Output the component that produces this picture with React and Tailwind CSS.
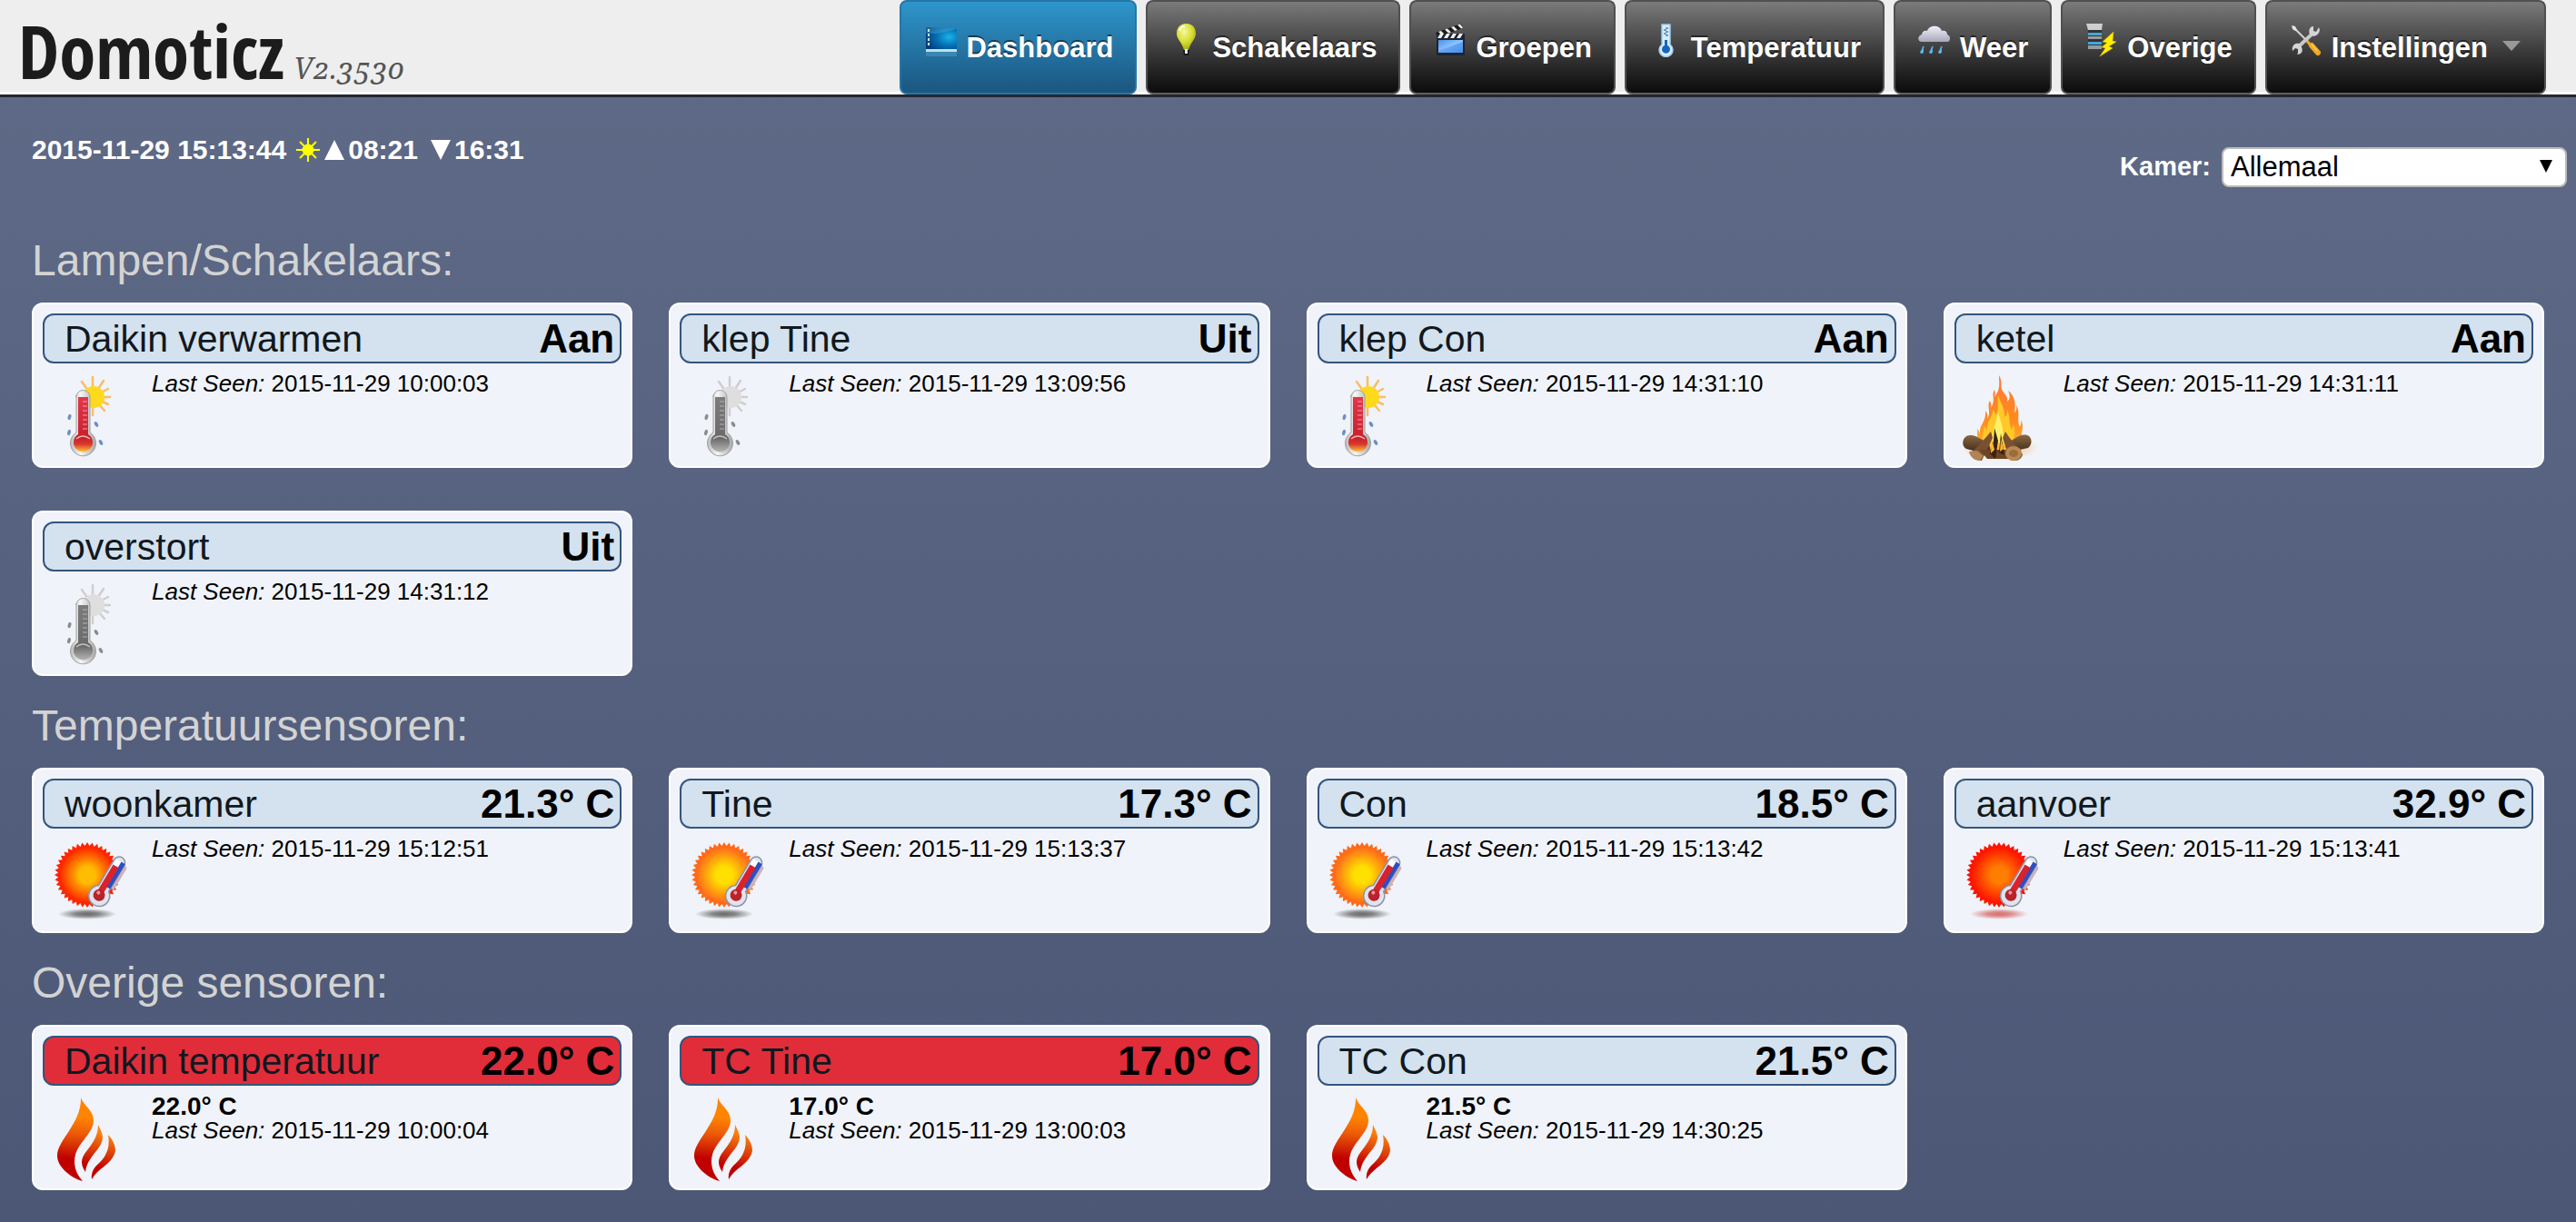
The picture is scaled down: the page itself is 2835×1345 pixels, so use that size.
import { useState } from 'react';

const DashboardIcon = () => (
    <svg viewBox="0 0 36 38" className="w-[36px] h-[38px] shrink-0" aria-hidden="true">
        <defs>
            <radialGradient id="screen" cx="0.75" cy="0.45" r="0.8">
                <stop offset="0" stopColor="#1bb4e6" />
                <stop offset="0.5" stopColor="#0470b4" />
                <stop offset="1" stopColor="#023a78" />
            </radialGradient>
        </defs>
        <rect x="2" y="5" width="34" height="24" fill="url(#screen)" />
        <path d="M2 5h34v2L14 12H2z" fill="#7fd4f5" opacity="0.25" />
        <path d="M4 7h2v3H4zM4 12h2v3H4zM4 17h2v3H4zM4 22h2v3H4z" fill="#c8ecfa" />
        <rect x="2" y="29" width="34" height="3" fill="#b7e2f5" />
        <rect x="2" y="32" width="34" height="5" fill="#8cc6e2" opacity="0.25" />
    </svg>
);

const BulbIcon = () => (
    <svg viewBox="0 0 36 38" className="w-[36px] h-[38px] shrink-0" aria-hidden="true">
        <defs>
            <radialGradient id="bulb" cx="0.4" cy="0.3" r="0.7">
                <stop offset="0" stopColor="#f6f9a0" />
                <stop offset="0.6" stopColor="#d5dc2c" />
                <stop offset="1" stopColor="#a3ab1c" />
            </radialGradient>
        </defs>
        <path d="M17.500 1C10 1 7 6 7 12c0 6 6 10 8 18h5c2-8 8-12 8-18 0-6-3-11-10.500-11z" fill="url(#bulb)" />
        <path d="M14 30h7l-1 6h-5z" fill="#17171a" />
        <path d="M16 29h3v5h-3z" fill="#e8e8e8" />
        <path d="M10 9c1-3 3-5 6-5" stroke="#fcfde0" strokeWidth="2" fill="none" />
    </svg>
);

const ClapperIcon = () => (
    <svg viewBox="0 0 36 38" className="w-[36px] h-[38px] shrink-0" aria-hidden="true">
        <defs>
            <linearGradient id="clap" x1="0" y1="0" x2="1" y2="1">
                <stop offset="0" stopColor="#4a8fe6" />
                <stop offset="0.5" stopColor="#8cc4ff" />
                <stop offset="1" stopColor="#4c97f0" />
            </linearGradient>
        </defs>
        <path d="M2 11L30 1l2 5L4 16z" fill="#1b1b1b" />
        <path d="M5 10l4 4 3-1-4-4zM12 7.500l4 4 3-1-4-4zM19 5l4 4 3-1-4-4zM26 2.500l4 4 2-1-3-4z" fill="#eee" />
        <path d="M3 12h31v24H3z" fill="#1d2430" />
        <path d="M7 12h4l-3 5H4zM14 12h4l-3 5h-4zM21 12h4l-3 5h-4zM28 12h4l-3 5h-4z" fill="#eee" />
        <path d="M5 19h27v14H5z" fill="url(#clap)" />
        <path d="M5 31L32 21v12H5z" fill="#3f88e6" opacity="0.5" />
    </svg>
);

const ThermometerIcon = () => (
    <svg viewBox="0 0 36 38" className="w-[36px] h-[38px] shrink-0" aria-hidden="true">
        <path d="M14 2h9v22a7.500 7.500 0 1 1-9 0z" fill="#d9edfc" stroke="#9ccbee" strokeWidth="1.500" />
        <path d="M17 19h3v6a4.500 4.500 0 1 1-3 0z" fill="#1565c0" />
        <path d="M18 6h3M18 10h3M18 14h3M16 8h3M16 12h3" stroke="#4d7fae" strokeWidth="1.500" />
    </svg>
);

const RainIcon = () => (
    <svg viewBox="0 0 36 38" className="w-[36px] h-[38px] shrink-0" aria-hidden="true">
        <defs>
            <linearGradient id="cloud" x1="0" y1="0" x2="0" y2="1">
                <stop offset="0" stopColor="#f0eff6" />
                <stop offset="1" stopColor="#a9a8bd" />
            </linearGradient>
        </defs>
        <path d="M4 21c-5 0-5-7 0-8 0-3 3-5 6-4 2-7 14-7 16 0 4-1 6 1 6 4 4 1 4 8 0 8z" fill="url(#cloud)" />
        <path d="M6 26l-2 5M16 26l-2 5M26 26l-2 5" stroke="#4aa8de" strokeWidth="2" />
        <path d="M2 32a2 2 0 0 0 4 0l0-4zM12 32a2 2 0 0 0 4 0l0-4zM22 32a2 2 0 0 0 4 0l0-4z" fill="#5bb5e8" />
    </svg>
);

const UtilityIcon = () => (
    <svg viewBox="0 0 36 38" className="w-[36px] h-[38px] shrink-0" aria-hidden="true">
        <path d="M1 1h18l-1 7H3z" fill="#cfcfcf" />
        <rect x="3" y="8" width="15" height="21" fill="#333" />
        <path d="M3 11h15v3H3zM3 21h15v3H3z" fill="#3fa9dc" />
        <path d="M3 15h15v3H3zM3 25h15v4H3z" fill="#9a9a9a" />
        <path d="M31 10L19 21l5 1-6 5 4 1-6 9 14-9-4-2 8-5-4-1z" fill="#ffee00" stroke="#e2bd00" strokeWidth="0.500" />
    </svg>
);

const ToolsIcon = () => (
    <svg viewBox="0 0 36 38" className="w-[36px] h-[38px] shrink-0" aria-hidden="true">
        <path d="M4 5l16 16" stroke="#d5d5d5" strokeWidth="2" />
        <path d="M2 3l4 1 2 4-2 1-3-2z" fill="#e4e4e4" />
        <path d="M10 26l16-15" stroke="#c9c9c9" strokeWidth="4" />
        <path d="M25 4c-4 1-5 7-2 10 4 2 9 0 10-6l-1-3-3 5-3-1V4zM10 23c-5-1-8 3-7 8l3-3 3 1v4l-1 2c5 0 7-4 5-8z" fill="#d4d4d4" />
        <path d="M19 20l4 5" stroke="#f2b01e" strokeWidth="3" />
        <path d="M24 25l7 8" stroke="#f2a81e" strokeWidth="6" strokeLinecap="round" />
        <path d="M24 24l6 7" stroke="#ffd35a" strokeWidth="1.500" />
    </svg>
);

const HeatingIcon = ({ off }) => (
    <svg viewBox="0 0 96 96" className={off ? 'size-24 shrink-0 grayscale' : 'size-24 shrink-0'} aria-hidden="true">
        <defs>
            <linearGradient id="tube" x1="0" y1="0" x2="1" y2="0">
                <stop offset="0" stopColor="#b9b9b9" />
                <stop offset="0.4" stopColor="#f6f6f6" />
                <stop offset="1" stopColor="#a6a6a6" />
            </linearGradient>
            <linearGradient id="mercury" x1="0" y1="0" x2="0" y2="1">
                <stop offset="0" stopColor="#e2384a" />
                <stop offset="0.75" stopColor="#c8202f" />
                <stop offset="0.86" stopColor="#d8392c" />
                <stop offset="1" stopColor="#ffc83a" />
            </linearGradient>
            <linearGradient id="mercuryOff" x1="0" y1="0" x2="0" y2="1">
                <stop offset="0" stopColor="#7c7c7c" />
                <stop offset="0.75" stopColor="#6a6a6a" />
                <stop offset="1" stopColor="#b5b5b5" />
            </linearGradient>
        </defs>
        <g stroke={off ? '#cfcfcf' : '#f9bd6a'} strokeWidth="2.500" strokeLinecap="round">
            <path d="M51 26V4M51 26L63 8M51 26L70 26M51 26L64 41M51 26V46M51 26L39 9M51 26L33 25M51 26L68 17M51 26L68 34" />
        </g>
        <circle cx="52" cy="26" r="12" fill={off ? '#dedede' : '#ffd91c'} />
        <path d="M33 26a7.500 7.500 0 0 1 15 0v39a14 14 0 1 1-15 0z" fill="url(#tube)" stroke="#a0a0a0" strokeWidth="1" />
        <path d="M35 26h11v41a10.500 10.500 0 1 1-11 0z" fill={off ? 'url(#mercuryOff)' : 'url(#mercury)'} />
        <path d="M40 31h5M40 36h5M40 41h5M40 46h5M40 51h5M40 56h5M40 61h5" stroke="#f0a0a8" strokeWidth="1.200" />
        <path d="M33 72q7-6 15 0" stroke="#f5b8a8" strokeWidth="1.500" fill="none" />
        <g fill={off ? '#8c8c8c' : '#6f8fc8'}>
            <ellipse cx="25.500" cy="48" rx="1.800" ry="3.200" transform="rotate(15 25.500 48)" />
            <ellipse cx="55" cy="56" rx="1.800" ry="3.200" transform="rotate(-30 55 56)" />
            <ellipse cx="25" cy="65" rx="1.800" ry="3.200" transform="rotate(15 25 65)" />
            <ellipse cx="60" cy="76" rx="1.800" ry="3.200" transform="rotate(-30 60 76)" />
        </g>
    </svg>
);

const CampfireIcon = () => (
    <svg viewBox="0 0 96 96" className="size-24 shrink-0" aria-hidden="true">
        <defs>
            <radialGradient id="glow">
                <stop offset="0" stopColor="#ff9a4a" stopOpacity="0.8" />
                <stop offset="1" stopColor="#ff9a4a" stopOpacity="0" />
            </radialGradient>
            <linearGradient id="fire" x1="0" y1="0" x2="0" y2="1">
                <stop offset="0" stopColor="#ff7a3c" />
                <stop offset="0.6" stopColor="#ff8a1e" />
                <stop offset="1" stopColor="#ffb52e" />
            </linearGradient>
            <linearGradient id="log" x1="0" y1="0" x2="0" y2="1">
                <stop offset="0" stopColor="#8a6a44" />
                <stop offset="1" stopColor="#3c2614" />
            </linearGradient>
        </defs>
        <ellipse cx="46" cy="82" rx="42" ry="14" fill="url(#glow)" />
        <path d="M26 58h40l4 20H22z" fill="#ffa32a" />
        <path d="M45 2c5 9 0 12 5 19 3 4 5 5 4 10 4-3 3-8 1-12 7 5 9 14 7 24 3-2 2-6 2-8 5 8 0 17 4 24 1-3 2-4 1-8 5 8-1 14 1 26l-8 6H22c-3-10 0-14-1-22 2 2 2 4 3 6-1-12 7-12 6-26 2 3 3 5 2 9 5-7-1-14 3-20 1 3 2 4 1 8 6-9 0-14 4-20 1 3 1 5 0 8 7-9 5-14 5-24z" fill="url(#fire)" />
        <path d="M44 24c3 10 8 14 7 24 3-2 3-5 3-8 4 9 1 14 5 22l2-6c3 10 0 16-3 24H29c-3-9-2-13 0-22l3 5c-1-12 7-14 6-24l4 7c3-7 1-14 2-22z" fill="#ffc928" />
        <path d="M44 42c2 10 6 14 6 34H38c-2-12 4-20 6-34z" fill="#fff06a" />
        <path d="M7 71c4-4 8-3 12-2l15 8 2 9-8 2-19-5c-4-2-5-8-2-12zM78 69c-5-3-9-1-13 1L52 78l2 9 23-5c4-3 5-9 1-13z" fill="url(#log)" />
        <path d="M31 70l5-6 2 7-12 25c-6 0-12-3-12-8zM56 70l-4-6-3 7 8 24c6 3 13 0 14-6z" fill="#7a5130" />
        <path d="M24 84h42l-10 10H32z" fill="#6b4423" />
        <path d="M40 60l4 14-3 20-6-6 4-14zM47 66l4 24-6-3z" fill="#3a2210" />
        <path d="M37 72l3 12-4 4zM47 72l3 11-4 3z" fill="#ffb52e" />
        <ellipse cx="61" cy="88" rx="9" ry="8" fill="#b98953" />
        <ellipse cx="61" cy="88" rx="5" ry="4" fill="#9a6c3d" />
        <path d="M12 86l9-1 7 6-4 5c-6 0-11-4-12-10z" fill="#b08454" />
    </svg>
);

const sunColors = {
    hot: { inner: '#ffbc00', outer: '#ff2400', shadow: '#6b6b6b' },
    warm: { inner: '#ffe000', outer: '#ff6a1a', shadow: '#6b6b6b' },
    boiling: { inner: '#ff7d00', outer: '#ff1400', shadow: '#d87070' },
};

// zigzag outline of the sun disc
const sunPoints = Array.from({ length: 80 }, (_, i) => {
    const r = i % 2 ? 32 : 36;
    const a = (i * Math.PI) / 40;
    return `${(45 + r * Math.cos(a)).toFixed(1)},${(40 + r * Math.sin(a)).toFixed(1)}`;
}).join(' ');

const SunIcon = ({ tone }) => {
    const c = sunColors[tone];
    return (
        <svg viewBox="0 0 96 96" className="size-24 shrink-0" aria-hidden="true">
            <defs>
                <radialGradient id={`sun-${tone}`}>
                    <stop offset="0" stopColor={c.inner} />
                    <stop offset="0.25" stopColor={c.inner} />
                    <stop offset="0.85" stopColor={c.outer} />
                    <stop offset="1" stopColor={c.outer} />
                </radialGradient>
                <radialGradient id={`shadow-${tone}`}>
                    <stop offset="0" stopColor={c.shadow} />
                    <stop offset="0.4" stopColor={c.shadow} stopOpacity="0.8" />
                    <stop offset="1" stopColor={c.shadow} stopOpacity="0" />
                </radialGradient>
            </defs>
            <ellipse cx="45" cy="83" rx="32" ry="6" fill={`url(#shadow-${tone})`} />
            <polygon points={sunPoints} fill={`url(#sun-${tone})`} />
            <g transform="rotate(31 57 64)">
                <path d="M63 18l5 3v28h-4z" fill="#c9b3bd" />
                <path d="M51 20a6.500 6.500 0 0 1 13 0v33a11.500 11.500 0 1 1-13 0z" fill="#dfe4ee" stroke="#8a93a8" strokeWidth="1.500" />
                <path d="M59 18h5v32h-5z" fill="#2b4fc4" />
                <path d="M53 25h7v34h-7z" fill="#d9222c" />
                <path d="M53 18h6v7h-6z" fill="#fff" />
                <circle cx="57" cy="62" r="6.500" fill="#b8232c" />
                <circle cx="55" cy="60" r="2" fill="#ee9a9a" />
            </g>
        </svg>
    );
};

const FlameIcon = () => (
    <svg viewBox="0 0 96 96" className="size-24 shrink-0" aria-hidden="true">
        <defs>
            <linearGradient id="flame" gradientUnits="userSpaceOnUse" x1="40" y1="24" x2="36" y2="70">
                <stop offset="0" stopColor="#ff8400" />
                <stop offset="0.4" stopColor="#ec5a08" />
                <stop offset="1" stopColor="#c00000" />
            </linearGradient>
            <linearGradient id="flameSmall" gradientUnits="userSpaceOnUse" x1="62" y1="42" x2="52" y2="78">
                <stop offset="0" stopColor="#fa8010" />
                <stop offset="1" stopColor="#c00000" />
            </linearGradient>
        </defs>
        <path d="M38 2C41 11 52 16 52 27C52 43 31 53 31 72C31 82 35 88 40 94C26 90 12 78 12 66C12 49 39 30 38 2Z" fill="url(#flame)" />
        <path d="M57 32C59 37 62 41 62 46C61 60 45 66 43 84C39 78 38 73 40 68C43 60 57 50 57 32Z" fill="url(#flameSmall)" />
        <path d="M68 43C72 47 76 54 76 60C74 75 57 79 50 92C49 87 51 81 55 77C64 69 71 60 68 43Z" fill="url(#flameSmall)" />
    </svg>
);

const menu = [
    { label: 'Dashboard', icon: <DashboardIcon />, active: true },
    { label: 'Schakelaars', icon: <BulbIcon /> },
    { label: 'Groepen', icon: <ClapperIcon /> },
    { label: 'Temperatuur', icon: <ThermometerIcon /> },
    { label: 'Weer', icon: <RainIcon /> },
    { label: 'Overige', icon: <UtilityIcon /> },
];

const sections = [
    {
        title: 'Lampen/Schakelaars:',
        devices: [
            { name: 'Daikin verwarmen', value: 'Aan', seen: '2015-11-29 10:00:03', icon: <HeatingIcon /> },
            { name: 'klep Tine', value: 'Uit', seen: '2015-11-29 13:09:56', icon: <HeatingIcon off /> },
            { name: 'klep Con', value: 'Aan', seen: '2015-11-29 14:31:10', icon: <HeatingIcon /> },
            { name: 'ketel', value: 'Aan', seen: '2015-11-29 14:31:11', icon: <CampfireIcon /> },
            { name: 'overstort', value: 'Uit', seen: '2015-11-29 14:31:12', icon: <HeatingIcon off /> },
        ],
    },
    {
        title: 'Temperatuursensoren:',
        devices: [
            { name: 'woonkamer', value: '21.3° C', seen: '2015-11-29 15:12:51', icon: <SunIcon tone="hot" /> },
            { name: 'Tine', value: '17.3° C', seen: '2015-11-29 15:13:37', icon: <SunIcon tone="warm" /> },
            { name: 'Con', value: '18.5° C', seen: '2015-11-29 15:13:42', icon: <SunIcon tone="warm" /> },
            { name: 'aanvoer', value: '32.9° C', seen: '2015-11-29 15:13:41', icon: <SunIcon tone="boiling" /> },
        ],
    },
    {
        title: 'Overige sensoren:',
        devices: [
            { name: 'Daikin temperatuur', value: '22.0° C', status: '22.0° C', seen: '2015-11-29 10:00:04', icon: <FlameIcon />, timeout: true },
            { name: 'TC Tine', value: '17.0° C', status: '17.0° C', seen: '2015-11-29 13:00:03', icon: <FlameIcon />, timeout: true },
            { name: 'TC Con', value: '21.5° C', status: '21.5° C', seen: '2015-11-29 14:30:25', icon: <FlameIcon /> },
        ],
    },
];

const navItem = 'flex h-[104px] items-start gap-[10px] rounded-lg border-2 pt-[23px] pl-[25px] pr-6 text-[31px] font-bold leading-[36px] text-white [text-shadow:0_-2px_0_rgba(0,0,0,0.5)]';
const navDark = 'border-[#505050] border-b-[#5f6058] bg-gradient-to-b from-[#7b7b7b] via-[#404040] to-[#0c0c0c]';
const navActive = 'border-[#2577a5] bg-gradient-to-b from-[#2e96cb] to-[#1b5680]';

const DeviceCard = ({ device }) => (
    <article className="rounded-xl border-2 border-white bg-[#f0f3f9] px-[10px] pt-[10px] pb-[6px] text-black">
        <div className={`flex h-[55px] items-center justify-between rounded-xl border-2 border-[#33557f] pl-[22px] pr-[6px] ${device.timeout ? 'bg-[#e02d39]' : 'bg-[#d4e1ee]'}`}>
            <h3 className="text-[41px] leading-[48px] text-[#101820]">{device.name}</h3>
            <span className="text-[44px] font-bold leading-[48px]">{device.value}</span>
        </div>
        <div className="flex gap-5 pt-[9px] pl-1">
            <div className="pt-0.5">{device.icon}</div>
            <div className="text-[26px] leading-[27px]">
                {device.status && <p className="text-[28px] font-bold">{device.status}</p>}
                <p><i>Last Seen:</i> {device.seen}</p>
            </div>
        </div>
    </article>
);

export default function App() {
    const [room, setRoom] = useState('Allemaal');

    return (
        <div className="min-h-screen bg-gradient-to-b from-[#606b88] to-[#4b5775] pb-[35px] font-['Liberation_Sans',Arial,sans-serif]">
            <header className="flex items-start justify-between border-b-[3px] border-[#23272f] bg-[#eeeeee] pl-5 pr-[33px] shadow-[inset_0_-3px_0_#fff]">
                <a href="#dashboard" className="flex items-baseline gap-[10px] pt-2 text-[#1c1c1c]">
                    <h1 className="font-['Open_Sans_Condensed','Open_Sans',sans-serif] text-[81px] font-semibold leading-[96px]">Domoticz</h1>
                    <span className="font-['Noto_Serif',Georgia,serif] text-[32px] italic leading-[40px] text-[#555] [font-variant-numeric:oldstyle-nums]">V2.3530</span>
                </a>
                <nav>
                    <ul className="flex gap-[10px]">
                        {menu.map((item) => (
                            <li key={item.label}>
                                <a href={`#${item.label.toLowerCase()}`} className={`${navItem} ${item.active ? navActive : navDark}`}>
                                    {item.icon}
                                    <span className="pt-[10px]">{item.label}</span>
                                </a>
                            </li>
                        ))}
                        <li>
                            <button type="button" aria-haspopup="menu" className={`${navItem} ${navDark}`}>
                                <ToolsIcon />
                                <span className="pt-[10px]">Instellingen</span>
                                <svg viewBox="0 0 20 12" className="ml-1.5 mr-0.5 mt-5 h-3 w-5" aria-hidden="true">
                                    <path d="M0 0h20L10 11z" fill="#999" />
                                </svg>
                            </button>
                        </li>
                    </ul>
                </nav>
            </header>

            <div className="flex h-[125px] items-start justify-between pl-[35px] pr-[10px] text-white">
                <p className="flex items-center pt-10 text-[30px] font-bold leading-[36px]">
                    2015-11-29 15:13:44
                    <svg viewBox="0 0 28 28" className="ml-2.5 size-7" aria-hidden="true">
                        <circle cx="14" cy="14" r="6.500" fill="#ffff00" />
                        <path d="M14 1v26M1 14h26M5 5l18 18M23 5L5 23" stroke="#ffff00" strokeWidth="2" />
                    </svg>
                    <svg viewBox="0 0 22 22" className="ml-1 mr-1 h-[22px] w-[22px]" aria-hidden="true">
                        <path d="M11 0l11 22H0z" fill="#fff" />
                    </svg>
                    08:21
                    <svg viewBox="0 0 22 22" className="ml-3.5 mr-1 h-[22px] w-[22px]" aria-hidden="true">
                        <path d="M0 0h22L11 22z" fill="#fff" />
                    </svg>
                    16:31
                </p>
                <div className="flex items-center gap-3 pt-[55px]">
                    <label htmlFor="room" className="text-[29px] font-bold">Kamer:</label>
                    <div className="relative">
                        <select
                            id="room"
                            value={room}
                            onChange={(e) => setRoom(e.target.value)}
                            className="h-[44px] w-[380px] appearance-none rounded-lg border-2 border-[#bbb] bg-white pl-2 text-[31px] leading-[38px] text-black"
                        >
                            <option>Allemaal</option>
                        </select>
                        <svg viewBox="0 0 14 14" className="pointer-events-none absolute right-4 top-[14px] size-[14px]" aria-hidden="true">
                            <path d="M0 0h14L7 14z" fill="#000" />
                        </svg>
                    </div>
                </div>
            </div>

            <main className="px-[35px]">
                {sections.map((section) => (
                    <section key={section.title} className="pt-[25px]">
                        <h2 className="mb-4 text-[48px] leading-[60px] text-[#d3d3d3]">{section.title}</h2>
                        <div className="grid grid-cols-4 gap-x-10 gap-y-[47px]">
                            {section.devices.map((device) => (
                                <DeviceCard key={device.name} device={device} />
                            ))}
                        </div>
                    </section>
                ))}
            </main>
        </div>
    );
}
